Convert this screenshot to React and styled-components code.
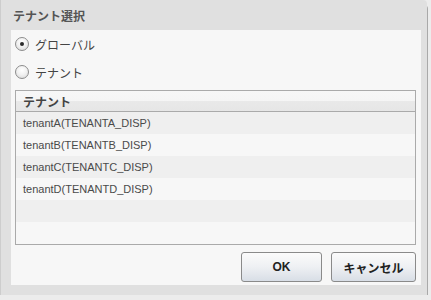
import styled, { createGlobalStyle } from "styled-components";

const GlobalStyle = createGlobalStyle`
  html, body {
    margin: 0;
    padding: 0;
    background: #ececec;
  }
`;

const Dialog = styled.div`
  width: 427px;
  height: 295px;
  box-sizing: border-box;
  background: #e0e0e0;
  border-left: 1px solid #cdcdcd;
  border-top-right-radius: 4px;
  box-shadow: 1px 5px 0 #a9a9a9;
  display: flex;
  flex-direction: column;
  font-family: "Liberation Sans", "Noto Sans CJK JP", sans-serif;
`;

const TitleBar = styled.div`
  height: 30px;
  display: flex;
  align-items: center;
  padding-left: 12px;
  font-size: 12px;
  font-weight: bold;
  color: #555;
`;

const Body = styled.div`
  margin: 0 6px 0 10px;
  height: 255px;
  box-sizing: border-box;
  background: #f7f7f7;
  padding: 0 5px 0 4px;
  display: flex;
  flex-direction: column;
`;

const RadioRow = styled.label`
  height: 28px;
  display: flex;
  align-items: center;
  gap: 6px;
  font-size: 12px;
  color: #444;
`;

const RadioCircle = styled.span`
  width: 14px;
  height: 14px;
  box-sizing: border-box;
  border-radius: 50%;
  border: 1px solid #8c8c8c;
  background: radial-gradient(circle at 50% 35%, #ffffff 0%, #f2f2f2 45%, #d6d6d6 100%);
  display: flex;
  align-items: center;
  justify-content: center;
  &::after {
    content: "";
    width: 4px;
    height: 4px;
    border-radius: 50%;
    background: ${(p) => (p.$checked ? "#2a2a2a" : "transparent")};
  }
`;

const Table = styled.div`
  margin-top: 4px;
  height: 155px;
  box-sizing: border-box;
  border: 1px solid #aaa;
  display: flex;
  flex-direction: column;
`;

const HeaderRow = styled.div`
  height: 21px;
  flex: none;
  box-sizing: border-box;
  border-bottom: 1px solid #aaa;
  background: linear-gradient(#f7f7f7 0%, #f5f5f5 50%, #e9e9e9 52%, #e6e6e6 100%);
  display: flex;
  align-items: center;
  padding-left: 7px;
  font-size: 12px;
  font-weight: bold;
  color: #444;
`;

const Row = styled.div`
  height: 22px;
  flex: none;
  display: flex;
  align-items: center;
  padding-left: 7px;
  font-size: 11px;
  letter-spacing: 0px;
  color: #4a4a4a;
  background: ${(p) => (p.$odd ? "#efefef" : "#f7f7f7")};
`;

const ButtonBar = styled.div`
  margin-top: 7px;
  display: flex;
  justify-content: flex-end;
  gap: 9px;
`;

const Button = styled.button`
  width: ${(p) => p.$w}px;
  height: 30px;
  box-sizing: border-box;
  border: 1px solid #8a8a8a;
  border-radius: 3px;
  background: linear-gradient(#fbfbfb 0%, #eef0f3 50%, #d8dee6 100%);
  font-family: "Liberation Sans", "Noto Sans CJK JP", sans-serif;
  font-size: 12px;
  font-weight: bold;
  color: #222;
  padding: 0;
`;

const tenants = [
  "tenantA(TENANTA_DISP)",
  "tenantB(TENANTB_DISP)",
  "tenantC(TENANTC_DISP)",
  "tenantD(TENANTD_DISP)",
  "",
  "",
];

export default function App() {
  return (
    <>
      <GlobalStyle />
      <Dialog>
        <TitleBar>テナント選択</TitleBar>
        <Body>
          <RadioRow>
            <RadioCircle $checked />
            グローバル
          </RadioRow>
          <RadioRow>
            <RadioCircle />
            テナント
          </RadioRow>
          <Table>
            <HeaderRow>テナント</HeaderRow>
            {tenants.map((t, i) => (
              <Row key={i} $odd={i % 2 === 0}>
                {t}
              </Row>
            ))}
          </Table>
          <ButtonBar>
            <Button $w={81}>OK</Button>
            <Button $w={85}>キャンセル</Button>
          </ButtonBar>
        </Body>
      </Dialog>
    </>
  );
}
